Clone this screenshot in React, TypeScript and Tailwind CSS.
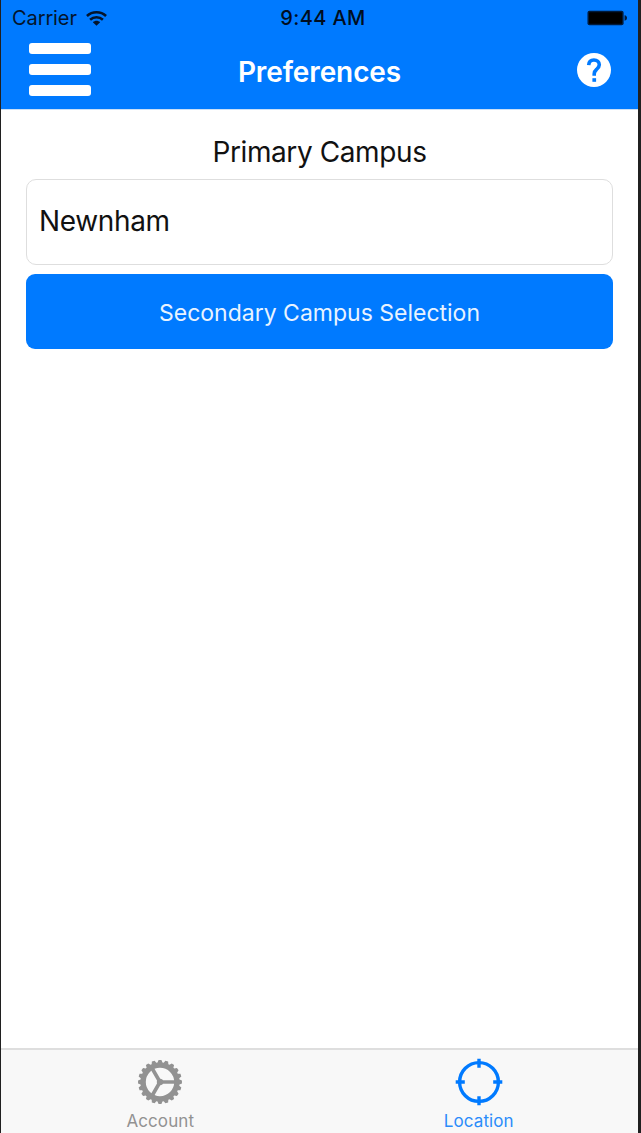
import React from "react";

const TEETH = 20;

function gearOutline(): string {
  const points: string[] = [];
  for (let i = 0; i < TEETH; i++) {
    const mid = ((i * 360) / TEETH - 90) * (Math.PI / 180);
    const corners: [number, number][] = [
      [19.6, -0.125],
      [22, -0.065],
      [22, 0.065],
      [19.6, 0.125],
    ];
    for (const [r, a] of corners) {
      points.push(`${(23 + r * Math.cos(mid + a)).toFixed(2)},${(23 + r * Math.sin(mid + a)).toFixed(2)}`);
    }
  }
  return `M${points.join("L")}Z`;
}

function WifiIcon() {
  return (
    <svg className="ml-[9px] h-[17px] w-[21px]" viewBox="0 0 22 17" fill="none" stroke="#04152c" strokeWidth="2.7">
      <path d="M1 5.9C6.5.6 15.5.6 21 5.9" />
      <path d="M4.3 9.8c3.8-3.6 9.6-3.6 13.4 0" />
      <path d="M7.2 12.4c2.2-2.1 5.4-2.1 7.6 0L11 16Z" fill="#04152c" stroke="none" />
    </svg>
  );
}

function BatteryIcon() {
  return (
    <svg className="h-4 w-[41px]" viewBox="0 0 42 16">
      <rect x=".5" y=".5" width="37" height="15" rx="2" fill="#001b3d" />
      <rect x="2" y="2" width="34" height="12" rx="1" fill="#000" />
      <path d="M38.5 5.2c3.3.5 3.3 5.1 0 5.6Z" fill="#001b3d" />
    </svg>
  );
}

function HelpIcon() {
  return (
    <svg className="h-[34px] w-[34px]" viewBox="0 0 34 34">
      <circle cx="17" cy="17" r="17" fill="#fff" />
      <path
        d="M11.7 12.1c.2-3.4 2.3-5.1 5.2-5.1 3.2 0 5.4 1.9 5.4 4.7 0 2.2-1 3.2-2.8 4.8-1.7 1.4-2.3 2.4-2.3 4.6v1.6"
        fill="none"
        stroke="#007aff"
        strokeWidth="3.6"
      />
      <rect x="15.4" y="25.2" width="3.7" height="3.6" fill="#007aff" />
    </svg>
  );
}

function GearIcon() {
  return (
    <svg className="h-[46px] w-[46px]" viewBox="0 0 46 46">
      <path d={`${gearOutline()}M37.2 23a14.2 14.2 0 1 0-28.4 0a14.2 14.2 0 1 0 28.4 0Z`} fill="#929292" fillRule="evenodd" />
      <path d="M23 23H38M23 23L15.5 10M23 23L15.5 36" stroke="#929292" strokeWidth="3.6" />
      <circle cx="23" cy="23" r="3.2" fill="#929292" />
    </svg>
  );
}

function TargetIcon() {
  return (
    <svg className="h-12 w-12" viewBox="0 0 48 48" fill="none" stroke="#007aff" strokeWidth="3.4">
      <circle cx="24" cy="24" r="19.4" />
      <path d="M24 .7V9.8M24 38.2V47.3M.7 24H9.8M38.2 24H47.3" />
    </svg>
  );
}

export default function App() {
  return (
    <div className="flex h-[1133px] w-[641px] flex-col border-l border-r-[3px] border-[#202020] bg-white font-['Inter',sans-serif] text-[#111]">
      <header className="h-[110px] shrink-0 border-b border-[#c9dff7] bg-[#007aff]">
        <div className="grid h-9 grid-cols-3 items-center px-[10px]">
          <div className="flex items-center pl-px text-[#04152c]">
            <span className="text-[20px] leading-6 tracking-[-0.1px]">Carrier</span>
            <WifiIcon />
          </div>
          <span className="pl-[7px] text-center text-[20px] leading-6 font-medium tracking-[0.4px] whitespace-nowrap text-[#000d20]">9:44 AM</span>
          <div className="flex justify-end">
            <BatteryIcon />
          </div>
        </div>
        <div className="flex h-[67px] items-center justify-between pr-[27px] pl-[28px]">
          <button aria-label="Menu" className="flex w-[62px] flex-col gap-[10.5px]">
            <span className="h-[10.5px] rounded-[3px] bg-white" />
            <span className="h-[10.5px] rounded-[3px] bg-white" />
            <span className="h-[10.5px] rounded-[3px] bg-white" />
          </button>
          <h1 className="mt-[5px] mr-[29px] text-[28px] leading-8 font-semibold tracking-[-0.1px] whitespace-nowrap text-white">Preferences</h1>
          <button aria-label="Help">
            <HelpIcon />
          </button>
        </div>
      </header>

      <main className="flex flex-1 flex-col px-[25px] pt-[25px]">
        <h2 className="text-center text-[28px] leading-[34px] tracking-[-0.4px]">Primary Campus</h2>
        <div className="mt-[10px] flex h-[86px] items-center rounded-[10px] border-[1.5px] border-[#dedede] pb-[3px] pl-[12px] text-[28px] tracking-[-0.35px]">
          Newnham
        </div>
        <button className="mt-[9px] h-[75px] rounded-[9px] bg-[#007aff] pt-[3px] text-[23px] text-[#e8f3ff]">
          Secondary Campus Selection
        </button>
      </main>

      <nav className="grid h-[85px] shrink-0 grid-cols-2 border-t-2 border-[#dedede] bg-[#f8f8f8]">
        <div className="flex flex-col items-center pt-[9px] text-[#929292]">
          <GearIcon />
          <span className="mt-1 text-[17px] leading-6 tracking-[0.1px]">Account</span>
        </div>
        <div className="flex flex-col items-center pt-2 text-[#2b8cfa]">
          <TargetIcon />
          <span className="mt-[3px] text-[17px] leading-6 tracking-[0.1px]">Location</span>
        </div>
      </nav>
    </div>
  );
}
